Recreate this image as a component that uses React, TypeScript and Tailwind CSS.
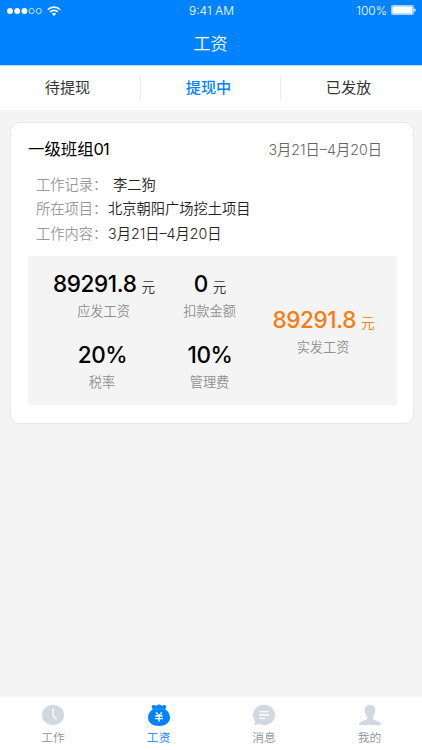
import React from "react";

type AmountProps = {
  value: string;
  unit?: string;
  label: string;
  highlight?: boolean;
};

const Amount = ({ value, unit, label, highlight }: AmountProps) => (
  <div className="flex flex-col items-center whitespace-nowrap">
    <div className={`flex h-[30px] items-baseline leading-[30px] ${highlight ? "text-[#fb7a12]" : "text-black"}`}>
      <span className={`text-[22.5px] tracking-[-0.4px] ${highlight ? "font-[450]" : "font-medium"}`}>{value}</span>
      {unit && (
        <span className={`mb-px ml-[5px] text-[13.5px] font-[350] ${highlight ? "" : "text-[#333]"}`}>{unit}</span>
      )}
    </div>
    <div className="mt-[2px] pr-px text-[13.2px] font-[350] leading-5 text-[#8f8f8f]">{label}</div>
  </div>
);

const Row = ({ label, children }: { label: string; children: React.ReactNode }) => (
  <div className="flex h-[24.5px] items-center text-[14.25px] font-[350]">
    <span className="w-[72px] text-[#999]">{label}</span>
    <span className="text-[#222]">{children}</span>
  </div>
);

const StatusBar = () => (
  <div className="flex h-[21px] items-center justify-between pl-[7px] pr-[6px] pt-[1px] text-[12px] font-[350] text-white">
    <div className="-mt-px flex w-[100px] items-center">
      <svg width="36" height="8" viewBox="0 0 36 8" fill="#fff">
        <circle cx="3" cy="4" r="2.9" />
        <circle cx="10.2" cy="4" r="2.9" />
        <circle cx="17.4" cy="4" r="2.9" />
        <circle cx="24.6" cy="4" r="2.6" fill="none" stroke="#fff" strokeWidth=".8" />
        <circle cx="31.8" cy="4" r="2.6" fill="none" stroke="#fff" strokeWidth=".8" />
      </svg>
      <svg className="ml-1" width="14" height="10" viewBox="0 0 14 10" fill="none" stroke="#fff" strokeWidth="1.6">
        <path d="M.8 3.700a8.800 8.800 0 0 1 12.400 0" />
        <path d="M3 6a5.700 5.700 0 0 1 8 0" />
        <path d="M4.900 7.800a3 3 0 0 1 4.200 0L7 9.900z" fill="#fff" stroke="none" />
      </svg>
    </div>
    <span>9:41 AM</span>
    <div className="flex w-[100px] items-center justify-end">
      <span>100%</span>
      <svg className="-mt-[2px] ml-[4px]" width="25" height="10" viewBox="0 0 25 10" fill="#fff">
        <rect x=".4" y=".4" width="22" height="9.2" rx="1.2" fill="none" stroke="#fff" strokeWidth=".7" />
        <rect x="1.2" y="1.2" width="20.4" height="7.6" rx=".5" />
        <path d="M23.3 3.2q1.5.4 1.5 1.800t-1.500 1.800z" />
      </svg>
    </div>
  </div>
);

const ClockIcon = () => (
  <svg width="22" height="22" viewBox="0 0 22 22">
    <ellipse cx="11" cy="11" rx="11" ry="10.2" fill="#d0d9e1" />
    <path d="M10.800 5.200v6.200l3.200 3.300" fill="none" stroke="#fff" strokeWidth="1.500" strokeLinecap="round" />
  </svg>
);

const MoneyIcon = () => (
  <svg width="22" height="22" viewBox="0 0 22 22">
    <path
      d="M4.900 5.300C3.200 3.600 3.400 1.200 5.500 1.100c1 0 1.500.5 2.100.6C8.800 1.900 9 .4 11 .4s2.200 1.500 3.400 1.300c.6-.1 1.100-.6 2.100-.6 2.100.1 2.300 2.500.6 4.200 3 1.700 4.900 4.700 4.900 8.200 0 5.300-4.800 8.500-11 8.500S0 18.800 0 13.500c0-3.500 1.900-6.500 4.900-8.200z"
      fill="#0183ff"
    />
    <path d="M6.100 4.800q4.900 1.400 9.800 0" fill="none" stroke="#5aafff" strokeWidth=".5" />
    <path d="M8 8.200l3 3.600 3-3.600M7.200 12h7.600M7.200 14.600h7.600M11 11.800v6" fill="none" stroke="#fff" strokeWidth="1.300" />
  </svg>
);

const ChatIcon = () => (
  <svg width="22" height="22" viewBox="0 0 22 22">
    <path
      d="M11 .8c6.100 0 11 4.500 11 10.100S17.100 21 11 21c-2 0-3.800-.4-5.400-1.200-1.300.8-3 1.300-5 1.200 1-.8 1.500-2 1.500-3.600C.8 15.600 0 13.400 0 10.900 0 5.300 4.900.8 11 .8z"
      fill="#d0d9e1"
    />
    <path d="M6.500 7.600h9M6.500 11h9M6.500 14.400h5.300" stroke="#fff" strokeWidth="1.300" strokeLinecap="round" />
  </svg>
);

const UserIcon = () => (
  <svg width="22" height="22" viewBox="0 0 22 22">
    <path
      d="M11 .8c3.400 0 5.300 2.300 5.300 5.500 0 2.700-1 5-2.600 6.200v1.600c0 1 .7 1.400 2 1.900 3.800 1.200 6.300 2.300 6.300 5H0c0-2.700 2.500-3.800 6.300-5 1.300-.5 2-.9 2-1.900v-1.600C6.700 11.300 5.700 9 5.700 6.300 5.700 3.100 7.600.8 11 .8z"
      fill="#d0d9e1"
    />
  </svg>
);

const navItems = [
  { label: "工作", icon: <ClockIcon /> },
  { label: "工资", icon: <MoneyIcon />, active: true },
  { label: "消息", icon: <ChatIcon /> },
  { label: "我的", icon: <UserIcon /> },
];

const App = () => {
  return (
    <div className="flex h-[750px] w-[422px] flex-col overflow-hidden bg-[#f4f4f4] font-['Inter','Noto_Sans_CJK_SC',sans-serif]">
      <header className="h-[65px] bg-[#0183ff]">
        <StatusBar />
        <h1 className="mt-[1px] pr-[1px] text-center text-[17px] font-[350] leading-[44px] text-white">工资</h1>
      </header>

      <div className="grid h-[45px] grid-cols-[140px_141px_141px] items-center border-t border-[#b8dcff] bg-white text-center text-[15.2px] text-[#333]">
        <div className="pr-[5px]">待提现</div>
        <div className="border-x border-[#ececec] pr-[4px] font-medium leading-6 text-[#0183ff]">提现中</div>
        <div className="pr-[6px]">已发放</div>
      </div>

      <div className="mx-[10px] mt-3 h-[302px] w-[404px] rounded-[10px] border border-[#e8e8e8] bg-white px-[17px]">
        <div className="flex h-[49px] items-center justify-between pr-[14px] pt-[4px]">
          <h2 className="text-[16.4px] text-black">
            一级班组<span className="tracking-[-0.8px]">01</span>
          </h2>
          <span className="text-[14.25px] font-[350] text-[#666]">3月21日–4月20日</span>
        </div>
        <div className="pl-[8px]">
          <Row label="工作记录：">
            <span className="ml-[5px]">李二狗</span>
          </Row>
          <Row label="所在项目：">北京朝阳广场挖土项目</Row>
          <Row label="工作内容：">3月21日–4月20日</Row>
        </div>
        <div className="mt-[10px] flex h-[149px] w-[369px] bg-[#f4f4f4] pt-[13px]">
          <div className="w-[152px] space-y-[19px]">
            <Amount value="89291.8" unit="元" label="应发工资" />
            <div className="-ml-[3px]">
              <Amount value="20%" label="税率" />
            </div>
          </div>
          <div className="w-[60px] space-y-[19px]">
            <Amount value="0" unit="元" label="扣款金额" />
            <Amount value="10%" label="管理费" />
          </div>
          <div className="flex-1 pl-[10px] pt-[36px]">
            <Amount value="89291.8" unit="元" label="实发工资" highlight />
          </div>
        </div>
      </div>

      <nav className="mt-auto grid h-[53px] grid-cols-[106px_105px_106px_105px] bg-white pt-[7px] text-[11.8px] font-[350]">
        {navItems.map((item) => (
          <div key={item.label} className="flex flex-col items-center">
            {item.icon}
            <span className={`mt-[3px] leading-[18px] ${item.active ? "text-[#0183ff]" : "text-[#8c939b]"}`}>
              {item.label}
            </span>
          </div>
        ))}
      </nav>
    </div>
  );
};

export default App;
